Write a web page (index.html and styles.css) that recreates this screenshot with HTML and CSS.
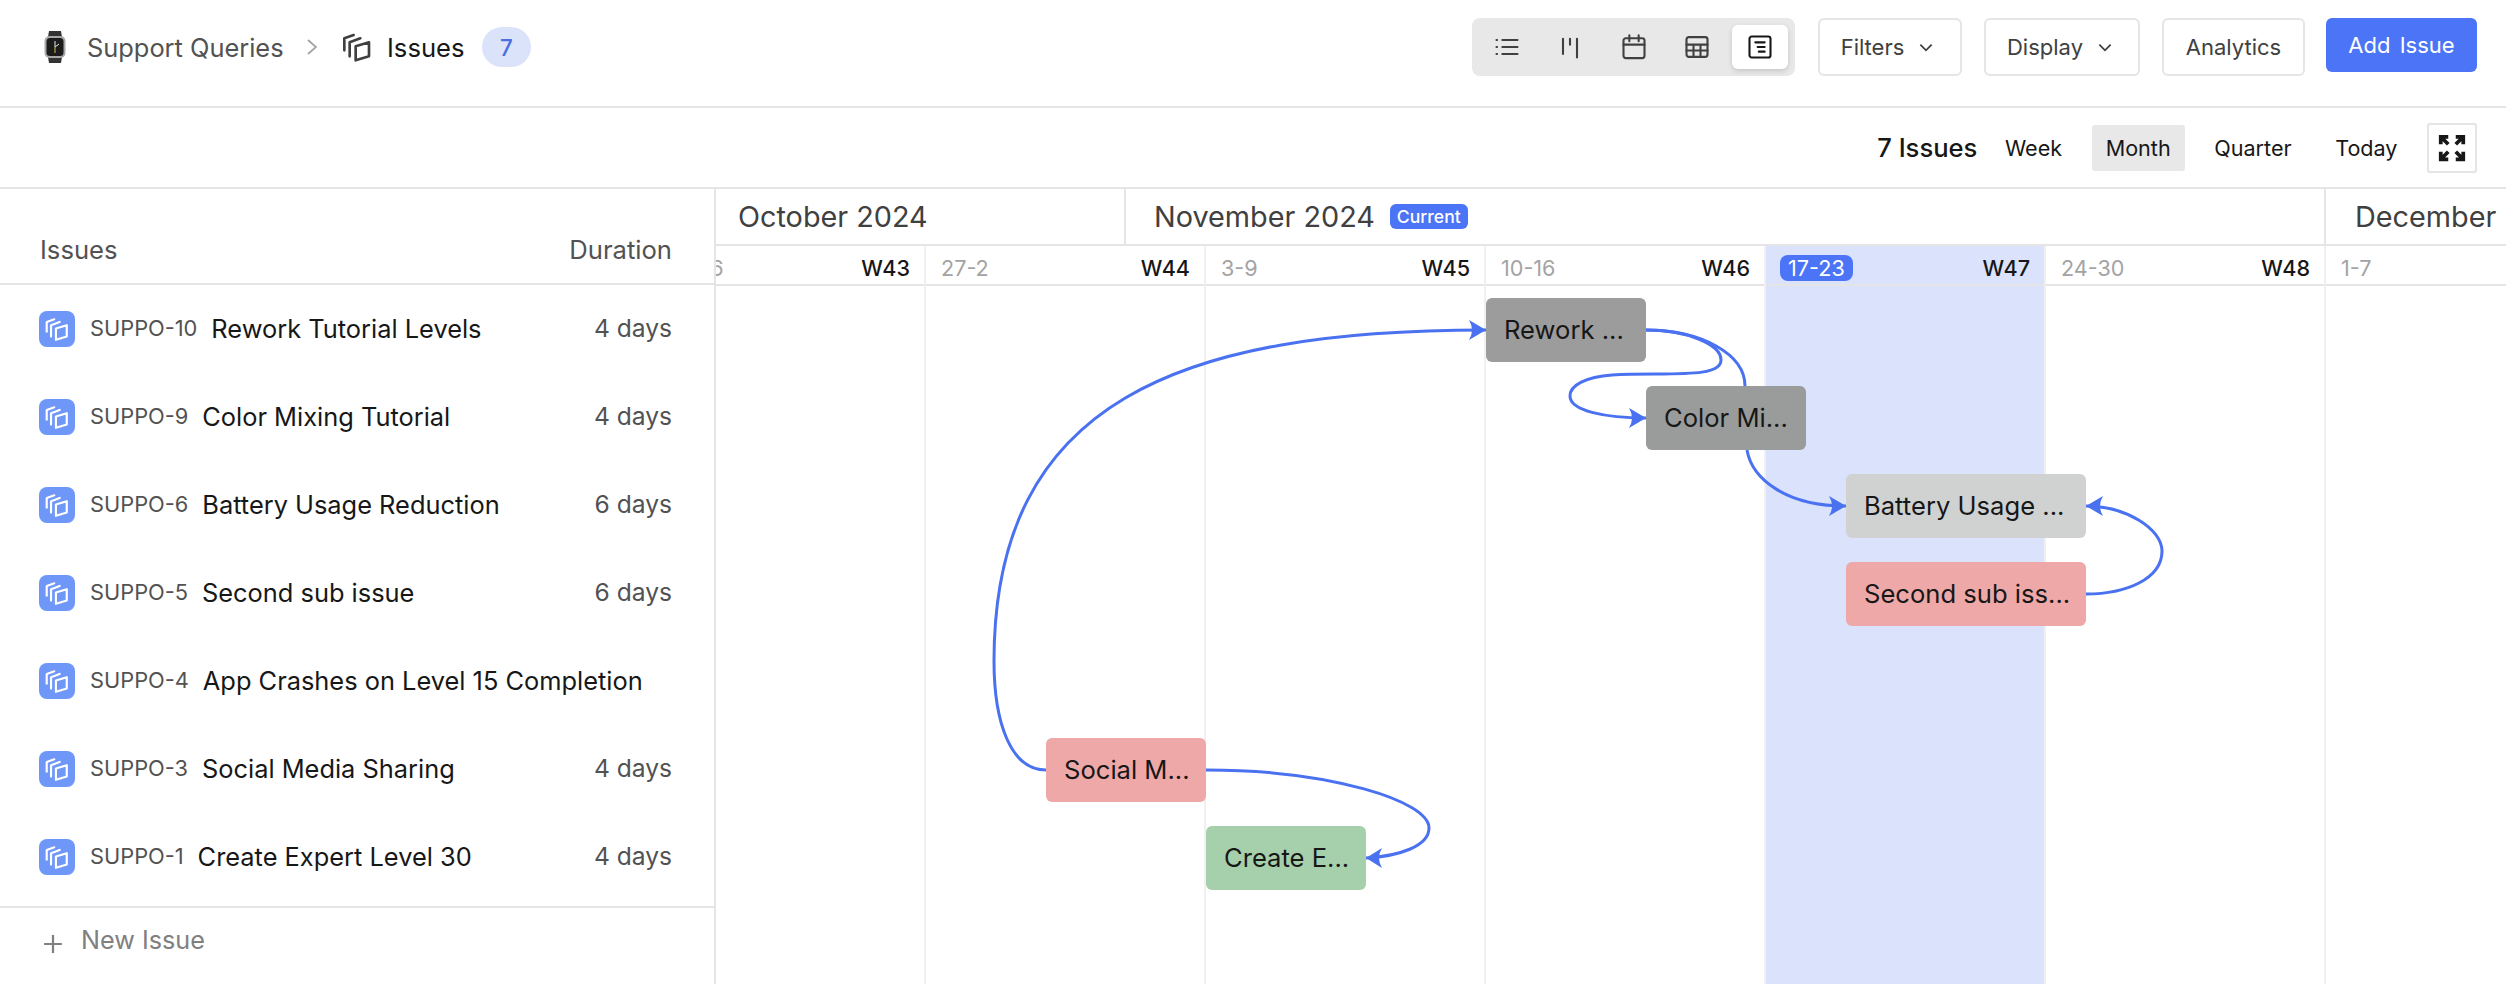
FILE: index.html
```html
<!DOCTYPE html>
<html lang="en">

<head>
    <meta charset="UTF-8">
    <title>Issues</title>
    <link rel="stylesheet" href="styles.css">
</head>

<body>
    <!-- top bar -->
    <header class="topbar">
        <div class="crumbs">
            <svg class="watch" viewBox="0 0 22 32">
                <path d="M5 0h12l1 6H4zM4 26h14l-1 6H5z" fill="#333"/>
                <rect x="0.5" y="5" width="21" height="22" rx="5" fill="#a8a8a8"/>
                <rect x="2.5" y="7" width="17" height="18" rx="3.5" fill="#1c1c1c"/>
                <path d="M11 16V10M11 16l4-3" stroke="#e6e6e6" stroke-width="1"/>
                <path d="M11 16v6" stroke="#c9c04a" stroke-width="1"/>
            </svg>
            <span class="crumb-parent">Support Queries</span>
            <svg class="crumb-sep" viewBox="0 0 10 16"><path d="M1 1l8 7-8 7" fill="none" stroke="#a3a3a3" stroke-width="1.8"/></svg>
            <svg class="stack" viewBox="0 0 24 24"><use href="#stack-icon"/></svg>
            <span class="crumb-current">Issues</span>
            <span class="count">7</span>
        </div>
        <div class="actions">
            <div class="views">
                <button class="view">
                    <svg viewBox="0 0 24 24"><path d="M8 6h13M8 12h13M8 18h13"/><path d="M3 6h.5M3 12h.5M3 18h.5"/></svg>
                </button>
                <button class="view">
                    <svg viewBox="0 0 24 24"><path d="M6 5v13M12 5v5M18 5v16"/></svg>
                </button>
                <button class="view">
                    <svg viewBox="0 0 24 24"><rect x="3" y="4.5" width="18" height="17" rx="2"/><path d="M3 10h18M8 2v5M16 2v5"/></svg>
                </button>
                <button class="view">
                    <svg viewBox="0 0 24 24"><rect x="3" y="3.5" width="18" height="17" rx="2"/><path d="M3 10h18M3 15h18M9 10v10M15 10v10"/></svg>
                </button>
                <button class="view active">
                    <svg viewBox="0 0 24 24"><rect x="3" y="3" width="18" height="18" rx="2"/><path d="M8 8h8M10 12h6M11 16h5"/></svg>
                </button>
            </div>
            <button class="btn btn-filters">Filters <svg class="caret" viewBox="0 0 12 8"><path d="M1 1.5l5 5 5-5"/></svg></button>
            <button class="btn btn-display">Display <svg class="caret" viewBox="0 0 12 8"><path d="M1 1.5l5 5 5-5"/></svg></button>
            <button class="btn btn-analytics">Analytics</button>
            <button class="btn-add">Add Issue</button>
        </div>
    </header>

    <!-- zoom controls -->
    <div class="controls">
        <span class="total">7 Issues</span>
        <button class="range">Week</button>
        <button class="range selected">Month</button>
        <button class="range">Quarter</button>
        <button class="range">Today</button>
        <button class="expand">
            <svg viewBox="0 0 24 24"><path d="M3 9V3h6M3 3l6 6M21 9V3h-6M21 3l-6 6M3 15v6h6M3 21l6-6M21 15v6h-6M21 21l-6-6"/></svg>
        </button>
    </div>

    <main class="main">
        <aside class="side">
            <div class="side-head">
                <span>Issues</span>
                <span>Duration</span>
            </div>
            <ul class="rows">
                <li class="row">
                    <span class="row-icon"><svg viewBox="0 0 24 24"><use href="#stack-icon"/></svg></span>
                    <span class="row-key">SUPPO-10</span>
                    <span class="row-title">Rework Tutorial Levels</span>
                    <span class="row-days">4 days</span>
                </li>
                <li class="row">
                    <span class="row-icon"><svg viewBox="0 0 24 24"><use href="#stack-icon"/></svg></span>
                    <span class="row-key">SUPPO-9</span>
                    <span class="row-title">Color Mixing Tutorial</span>
                    <span class="row-days">4 days</span>
                </li>
                <li class="row">
                    <span class="row-icon"><svg viewBox="0 0 24 24"><use href="#stack-icon"/></svg></span>
                    <span class="row-key">SUPPO-6</span>
                    <span class="row-title">Battery Usage Reduction</span>
                    <span class="row-days">6 days</span>
                </li>
                <li class="row">
                    <span class="row-icon"><svg viewBox="0 0 24 24"><use href="#stack-icon"/></svg></span>
                    <span class="row-key">SUPPO-5</span>
                    <span class="row-title">Second sub issue</span>
                    <span class="row-days">6 days</span>
                </li>
                <li class="row">
                    <span class="row-icon"><svg viewBox="0 0 24 24"><use href="#stack-icon"/></svg></span>
                    <span class="row-key">SUPPO-4</span>
                    <span class="row-title">App Crashes on Level 15 Completion</span>
                </li>
                <li class="row">
                    <span class="row-icon"><svg viewBox="0 0 24 24"><use href="#stack-icon"/></svg></span>
                    <span class="row-key">SUPPO-3</span>
                    <span class="row-title">Social Media Sharing</span>
                    <span class="row-days">4 days</span>
                </li>
                <li class="row">
                    <span class="row-icon"><svg viewBox="0 0 24 24"><use href="#stack-icon"/></svg></span>
                    <span class="row-key">SUPPO-1</span>
                    <span class="row-title">Create Expert Level 30</span>
                    <span class="row-days">4 days</span>
                </li>
            </ul>
            <div class="new-issue">
                <svg viewBox="0 0 18 18"><path d="M9 1v16M1 9h16"/></svg>
                New Issue
            </div>
        </aside>

        <section class="chart">
            <div class="months">
                <div class="month month-oct">October 2024</div>
                <div class="month month-nov">November 2024 <span class="current">Current</span></div>
                <div class="month month-dec">December 2024</div>
            </div>
            <div class="weeks">
                <div class="week"><div class="week-head"><span class="dates">20-26</span><b>W43</b></div></div>
                <div class="week"><div class="week-head"><span class="dates">27-2</span><b>W44</b></div></div>
                <div class="week"><div class="week-head"><span class="dates">3-9</span><b>W45</b></div></div>
                <div class="week"><div class="week-head"><span class="dates">10-16</span><b>W46</b></div></div>
                <div class="week this-week"><div class="week-head"><span class="dates today">17-23</span><b>W47</b></div></div>
                <div class="week"><div class="week-head"><span class="dates">24-30</span><b>W48</b></div></div>
                <div class="week"><div class="week-head"><span class="dates">1-7</span></div></div>
            </div>

            <!-- coordinates below are relative to the chart box (716, 188) -->
            <div class="canvas">
                <svg class="links" viewBox="0 0 1790 796">
                    <g class="link">
                        <path d="M330 581C294 581 278 532 278 472C278 212 464 141 770 141"/>
                        <path d="M930 141C970 141 1005 155 1005 171C1005 190 950 183 896 186C870 188 854 196 854 207C854 222 890 229 930 229"/>
                        <path d="M930 141C985 141 1029 165 1029 197M1031 261C1036 290 1070 317 1130 317"/>
                        <path d="M1370 405C1410 405 1446 390 1446 362C1446 340 1410 317 1370 317"/>
                        <path d="M490 581C614 581 713 612 713 639C713 657 684 667 650 669"/>
                    </g>
                    <g class="heads">
                        <path d="M770 141L753 131Q759 141 753 151Z"/>
                        <path d="M930 229L913 219Q919 229 913 239Z"/>
                        <path d="M1130 317L1113 307Q1119 317 1113 327Z"/>
                        <path d="M1370 317L1387 307Q1381 317 1387 327Z"/>
                        <path d="M650 669L666 659Q660 669 666 679Z"/>
                    </g>
                </svg>
                <div class="bar bar-rework">Rework ...</div>
                <div class="bar bar-color">Color Mi...</div>
                <div class="bar bar-battery">Battery Usage ...</div>
                <div class="bar bar-second">Second sub iss...</div>
                <div class="bar bar-social">Social M...</div>
                <div class="bar bar-create">Create E...</div>
            </div>
        </section>
    </main>

    <svg class="defs" width="0" height="0">
        <symbol id="stack-icon" viewBox="0 0 24 24">
            <path d="M2.5 14.5V5.5L9.5 3M6.5 19V8.5L14.5 5.5M11 11.5L21 8.5V19L11 22Z" fill="none" stroke="currentColor" stroke-width="2" stroke-linejoin="round" stroke-linecap="round"/>
        </symbol>
    </svg>
</body>

</html>
```

FILE: styles.css
```css
* {
    margin: 0;
    padding: 0;
    box-sizing: border-box;
}

html,
body {
    height: 100%;
}

body {
    display: flex;
    flex-direction: column;
    overflow: hidden;
    background-color: #fff;
    color: #171717;
    font-family: Inter, "Liberation Sans", sans-serif;
    font-size: 25.6px;
}

button {
    font-family: inherit;
    color: inherit;
    background: none;
    border: 0;
}

.defs {
    position: absolute;
}

/* top bar */
.topbar {
    flex: none;
    height: 108px;
    display: flex;
    justify-content: space-between;
    padding: 18px 29px 0 44px;
    border-bottom: 2px solid #e5e5e5;
}

.crumbs {
    height: 58px;
    display: flex;
    align-items: center;
}

.watch {
    width: 22px;
    height: 32px;
    margin-right: 21px;
}

.crumb-parent {
    width: 196px;
    color: #525252;
    font-size: 25.4px;
    white-space: nowrap;
}

.crumb-sep {
    width: 10px;
    height: 16px;
    margin: 0 24px;
}

.stack {
    width: 32px;
    height: 32px;
    margin-right: 14px;
    color: #404040;
}

.crumb-current {
    width: 76px;
}

.count {
    width: 49px;
    height: 40px;
    margin-left: 19px;
    border-radius: 20px;
    background-color: #dbe3fb;
    color: #4c6fe0;
    display: flex;
    align-items: center;
    justify-content: center;
    font-size: 22.4px;
    font-weight: 500;
}

.actions {
    display: flex;
    align-items: flex-start;
}

.views {
    width: 323px;
    height: 58px;
    padding: 7px;
    display: flex;
    justify-content: space-between;
    border-radius: 8px;
    background-color: #e8e8e8;
    margin-right: 23px;
}

.view {
    width: 56px;
    height: 44px;
    display: flex;
    align-items: center;
    justify-content: center;
    border-radius: 6px;
}

.view svg {
    width: 28px;
    height: 28px;
    fill: none;
    stroke: #404040;
    stroke-width: 1.8;
    stroke-linecap: round;
}

.view.active {
    background-color: #fff;
    box-shadow: 0 2px 5px rgba(0, 0, 0, 0.15);
}

.view.active svg {
    stroke: #171717;
}

.btn {
    height: 58px;
    display: flex;
    align-items: center;
    justify-content: center;
    gap: 15px;
    border: 2px solid #e5e5e5;
    border-radius: 6px;
    font-size: 22px;
    color: #404040;
}

.btn-filters {
    width: 144px;
    margin-right: 22px;
    padding-right: 6px;
}

.btn-display {
    width: 156px;
    margin-right: 22px;
    padding-right: 5px;
}

.btn-analytics {
    width: 143px;
    margin-right: 21px;
}

.caret {
    width: 14px;
    height: 9px;
    fill: none;
    stroke: #404040;
    stroke-width: 1.6;
}

.btn-add {
    width: 151px;
    height: 54px;
    border-radius: 6px;
    background-color: #4c74f6;
    color: #fff;
    font-size: 22px;
    word-spacing: 3px;
}

/* second row */
.controls {
    flex: none;
    height: 81px;
    display: flex;
    align-items: center;
    justify-content: flex-end;
    gap: 15.5px;
    padding: 0 29px 0 0;
    border-bottom: 2px solid #e5e5e5;
}

.total {
    font-size: 25.6px;
    font-weight: 500;
    margin-right: -2px;
}

.range {
    height: 46px;
    padding: 0 14px;
    border-radius: 3px;
    font-size: 21.6px;
}

.range.selected {
    background-color: #e8e8e8;
}

.expand {
    width: 50px;
    height: 50px;
    border: 2px solid #e5e5e5;
    border-radius: 3px;
    display: flex;
    align-items: center;
    justify-content: center;
}

.expand svg {
    width: 30px;
    height: 30px;
    fill: none;
    stroke: #171717;
    stroke-width: 3;
}

/* main area */
.main {
    flex: 1;
    display: flex;
    min-height: 0;
}

.side {
    flex: none;
    width: 716px;
    display: flex;
    flex-direction: column;
    border-right: 2px solid #e5e5e5;
}

.side-head {
    height: 96px;
    padding: 0 42px 18px 40px;
    display: flex;
    align-items: flex-end;
    justify-content: space-between;
    border-bottom: 2px solid #e5e5e5;
    color: #525252;
}

.rows {
    list-style: none;
}

.row {
    height: 88px;
    display: flex;
    align-items: center;
    padding: 0 42px 0 39px;
}

.row-icon {
    width: 36px;
    height: 36px;
    border-radius: 8px;
    background-color: #6e97f7;
    color: #fff;
    display: flex;
    align-items: center;
    justify-content: center;
}

.row-icon svg {
    width: 26px;
    height: 26px;
}

/* text sits a little above the icon centre */
.row-key {
    margin: 0 14px 2px 15px;
    font-size: 21.8px;
    color: #525252;
}

.row-title {
    margin-bottom: 2px;
    font-size: 25.4px;
}

.row-days {
    margin: 0 0 2px auto;
    font-size: 24.6px;
    color: #525252;
}

.new-issue {
    margin-top: 5px;
    flex: 1;
    border-top: 2px solid #e5e5e5;
    padding: 17px 0 0 43px;
    display: flex;
    align-items: flex-start;
    gap: 18px;
    font-size: 25.2px;
    color: #808080;
}

.new-issue svg {
    width: 20px;
    height: 20px;
    margin-top: 9px;
    fill: none;
    stroke: #808080;
    stroke-width: 2;
}

/* gantt */
.chart {
    flex: 1;
    min-width: 0;
    position: relative;
    overflow: hidden;
    display: flex;
    flex-direction: column;
}

.months {
    flex: none;
    height: 57px;
    display: flex;
    border-bottom: 2px solid #e5e5e5;
}

.month {
    flex: none;
    display: flex;
    align-items: center;
    gap: 15px;
    font-size: 28.8px;
    color: #404040;
    white-space: nowrap;
}

.month-oct {
    width: 410px;
    padding-left: 22px;
    border-right: 2px solid #e5e5e5;
}

.month-nov {
    width: 1200px;
    padding-left: 28px;
    border-right: 2px solid #e5e5e5;
}

.month-dec {
    padding-left: 29px;
}

.current {
    padding: 2px 7px;
    border-radius: 6px;
    background-color: #4c74f6;
    color: #fff;
    font-size: 17.6px;
    font-weight: 500;
}

.weeks {
    flex: 1;
    display: flex;
    margin-left: -70px;
}

.week {
    flex: none;
    width: 280px;
    border-right: 2px solid #f0f0f0;
}

.week-head {
    height: 40px;
    display: flex;
    align-items: center;
    justify-content: space-between;
    padding: 5px 14px 0 15px;
    border-bottom: 2px solid #e5e5e5;
    font-size: 21.6px;
}

.week-head b {
    font-weight: 500;
}

.dates {
    font-size: 21.6px;
    color: #a3a3a3;
}

.today {
    height: 26px;
    padding: 0 8px;
    margin-left: -1px;
    border-radius: 8px;
    background-color: #4c74f6;
    color: #fff;
    line-height: 26px;
}

.this-week {
    background-color: #dae2fc;
}

.canvas {
    position: absolute;
    top: 0;
    left: 0;
    width: 1790px;
    height: 796px;
}

.links {
    position: absolute;
    top: 0;
    left: 0;
    width: 1790px;
    height: 796px;
}

.link path {
    fill: none;
    stroke: #4a72f0;
    stroke-width: 3;
}

.heads path {
    fill: #4a72f0;
}

.bar {
    position: absolute;
    height: 64px;
    padding: 0 18px 2px;
    display: flex;
    align-items: center;
    border-radius: 6px;
    white-space: nowrap;
}

.bar-rework {
    left: 770px;
    top: 109px;
    width: 160px;
    background-color: #9c9c9c;
}

.bar-color {
    left: 930px;
    top: 197px;
    width: 160px;
    background-color: #9a9c9b;
}

.bar-battery {
    left: 1130px;
    top: 285px;
    width: 240px;
    background-color: #d0d2d2;
}

.bar-second {
    left: 1130px;
    top: 373px;
    width: 240px;
    background-color: #eea8a8;
}

.bar-social {
    left: 330px;
    top: 549px;
    width: 160px;
    background-color: #eea8a8;
}

.bar-create {
    left: 490px;
    top: 637px;
    width: 160px;
    background-color: #a6d0ac;
}
```
